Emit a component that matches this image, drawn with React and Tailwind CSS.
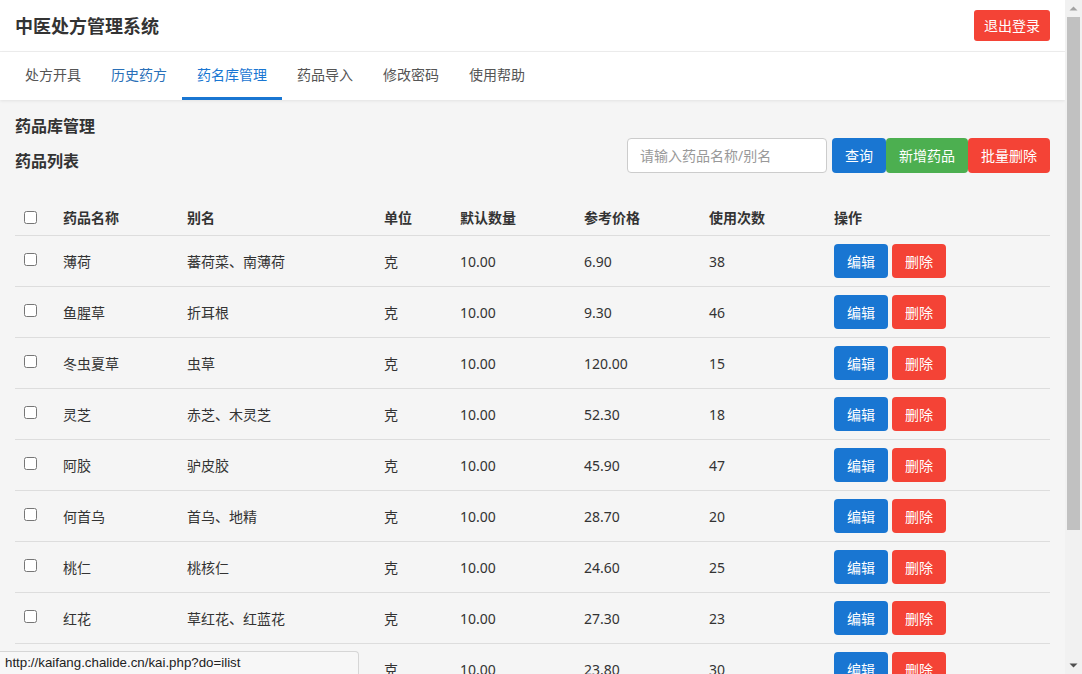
import { useState } from "react"

const drugs = [
    { name: '薄荷', alias: '蕃荷菜、南薄荷', unit: '克', qty: '10.00', price: '6.90', used: 38 },
    { name: '鱼腥草', alias: '折耳根', unit: '克', qty: '10.00', price: '9.30', used: 46 },
    { name: '冬虫夏草', alias: '虫草', unit: '克', qty: '10.00', price: '120.00', used: 15 },
    { name: '灵芝', alias: '赤芝、木灵芝', unit: '克', qty: '10.00', price: '52.30', used: 18 },
    { name: '阿胶', alias: '驴皮胶', unit: '克', qty: '10.00', price: '45.90', used: 47 },
    { name: '何首乌', alias: '首乌、地精', unit: '克', qty: '10.00', price: '28.70', used: 20 },
    { name: '桃仁', alias: '桃核仁', unit: '克', qty: '10.00', price: '24.60', used: 25 },
    { name: '红花', alias: '草红花、红蓝花', unit: '克', qty: '10.00', price: '27.30', used: 23 },
    { name: '当归', alias: '干归、秦归', unit: '克', qty: '10.00', price: '23.80', used: 30 },
    { name: '黄芪', alias: '北芪、绵芪', unit: '克', qty: '10.00', price: '18.50', used: 41 },
    { name: '甘草', alias: '国老、甜草', unit: '克', qty: '10.00', price: '8.60', used: 52 },
]

const tabs = ['处方开具', '历史药方', '药名库管理', '药品导入', '修改密码', '使用帮助']

const cols = 'grid grid-cols-[40px_124px_197px_76px_124px_125px_125px_1fr]'

function App() {
    const [busca, setBusca] = useState('')
    const [marcados, setMarcados] = useState([])

    function toggle(i) {
        setMarcados(marcados.includes(i) ? marcados.filter(x => x !== i) : [...marcados, i])
    }

    return (
        <div className="min-h-screen bg-[#f5f5f5] pr-[17px] text-[#333] text-[14px] font-['Noto_Sans','Noto_Sans_CJK_SC',sans-serif]">

            {/* Cabeçalho */}
            <div className="bg-white h-[52px] border-b border-[#eee] flex items-center justify-between px-[15px]">
                <h1 className="text-[18px] font-bold leading-none">中医处方管理系统</h1>
                <button className="bg-[#f44336] text-white h-[31px] px-[10px] rounded-[3px] leading-none">退出登录</button>
            </div>

            {/* Abas */}
            <div className="bg-white h-[48px] flex pl-[10px] shadow-[0_1px_3px_rgba(0,0,0,0.08)]">
                {tabs.map((t, i) => (
                    <div
                        key={t}
                        className={`px-[15px] flex items-center border-b-[3px] ${
                            i === 2
                                ? 'border-[#1976d2] text-[#1976d2]'
                                : i === 1
                                    ? 'border-transparent text-[#2a70b8]'
                                    : 'border-transparent text-[#555]'
                        }`}
                    >
                        {t}
                    </div>
                ))}
            </div>

            <div className="px-[15px] pt-[16px] pb-[46px]">
                <h2 className="text-[16px] font-bold leading-[20px]">药品库管理</h2>

                <div className="flex justify-between items-start mt-[2px]">
                    <h3 className="text-[16px] font-bold leading-[20px] mt-[13px]">药品列表</h3>
                    <div className="flex h-[35px]">
                        <input
                            value={busca}
                            onChange={(e) => setBusca(e.target.value)}
                            placeholder="请输入药品名称/别名"
                            className="w-[200px] h-[35px] bg-white border border-[#ccc] rounded-[4px] px-[12px] mr-[5px] outline-none placeholder:text-[#999]"
                        />
                        <button className="bg-[#1976d2] text-white px-[13px] rounded-[4px]">查询</button>
                        <button className="bg-[#4caf50] text-white px-[13px] rounded-[4px]">新增药品</button>
                        <button className="bg-[#f44336] text-white px-[13px] rounded-[4px]">批量删除</button>
                    </div>
                </div>

                {/* Tabela */}
                <div className="mt-[27px]">
                    <div className={`${cols} h-[36px] items-center border-b border-[#ddd] font-bold`}>
                        <div className="pl-[9px] flex items-center"><input type="checkbox" className="w-[13px] h-[13px]" /></div>
                        <div className="pl-[8px]">药品名称</div>
                        <div className="pl-[8px]">别名</div>
                        <div className="pl-[8px]">单位</div>
                        <div className="pl-[8px]">默认数量</div>
                        <div className="pl-[8px]">参考价格</div>
                        <div className="pl-[8px]">使用次数</div>
                        <div className="pl-[8px]">操作</div>
                    </div>
                    {drugs.map((d, i) => (
                        <div key={d.name} className={`${cols} h-[51px] items-center border-b border-[#ddd]`}>
                            <div className="pl-[9px] flex items-center -mt-[3px]">
                                <input type="checkbox" checked={marcados.includes(i)} onChange={() => toggle(i)} className="w-[13px] h-[13px]" />
                            </div>
                            <div className="pl-[8px]">{d.name}</div>
                            <div className="pl-[8px]">{d.alias}</div>
                            <div className="pl-[8px]">{d.unit}</div>
                            <div className="pl-[8px]">{d.qty}</div>
                            <div className="pl-[8px]">{d.price}</div>
                            <div className="pl-[8px]">{d.used}</div>
                            <div className="pl-[8px] flex gap-[4px]">
                                <button className="bg-[#1976d2] text-white w-[54px] h-[34px] rounded-[4px]">编辑</button>
                                <button className="bg-[#f44336] text-white w-[54px] h-[34px] rounded-[4px]">删除</button>
                            </div>
                        </div>
                    ))}
                </div>
            </div>

            {/* Barra de rolagem da janela */}
            <div className="fixed right-0 top-0 bottom-0 w-[17px] bg-[#f1f1f1] flex flex-col items-center">
                <svg width="17" height="17" viewBox="0 0 17 17"><path d="M4.5 10.5 L8.5 6.5 L12.5 10.5 Z" fill="#a3a3a3" /></svg>
                <div className="w-[13px] h-[513px] bg-[#c1c1c1]" />
                <div className="flex-1" />
                <svg width="17" height="17" viewBox="0 0 17 17"><path d="M4.5 6.5 L8.5 10.5 L12.5 6.5 Z" fill="#505050" /></svg>
            </div>

            {/* Barra de status do navegador */}
            <div className="fixed left-0 bottom-0 w-[359px] h-[23px] bg-[#f7f7f7] border-t border-r border-[#d6d6d6] rounded-tr-[4px] text-[13.3px] text-[#222] pl-[5px] flex items-center font-['Liberation_Sans',sans-serif]">
                http://kaifang.chalide.cn/kai.php?do=ilist
            </div>
        </div>
    )
}

export default App
